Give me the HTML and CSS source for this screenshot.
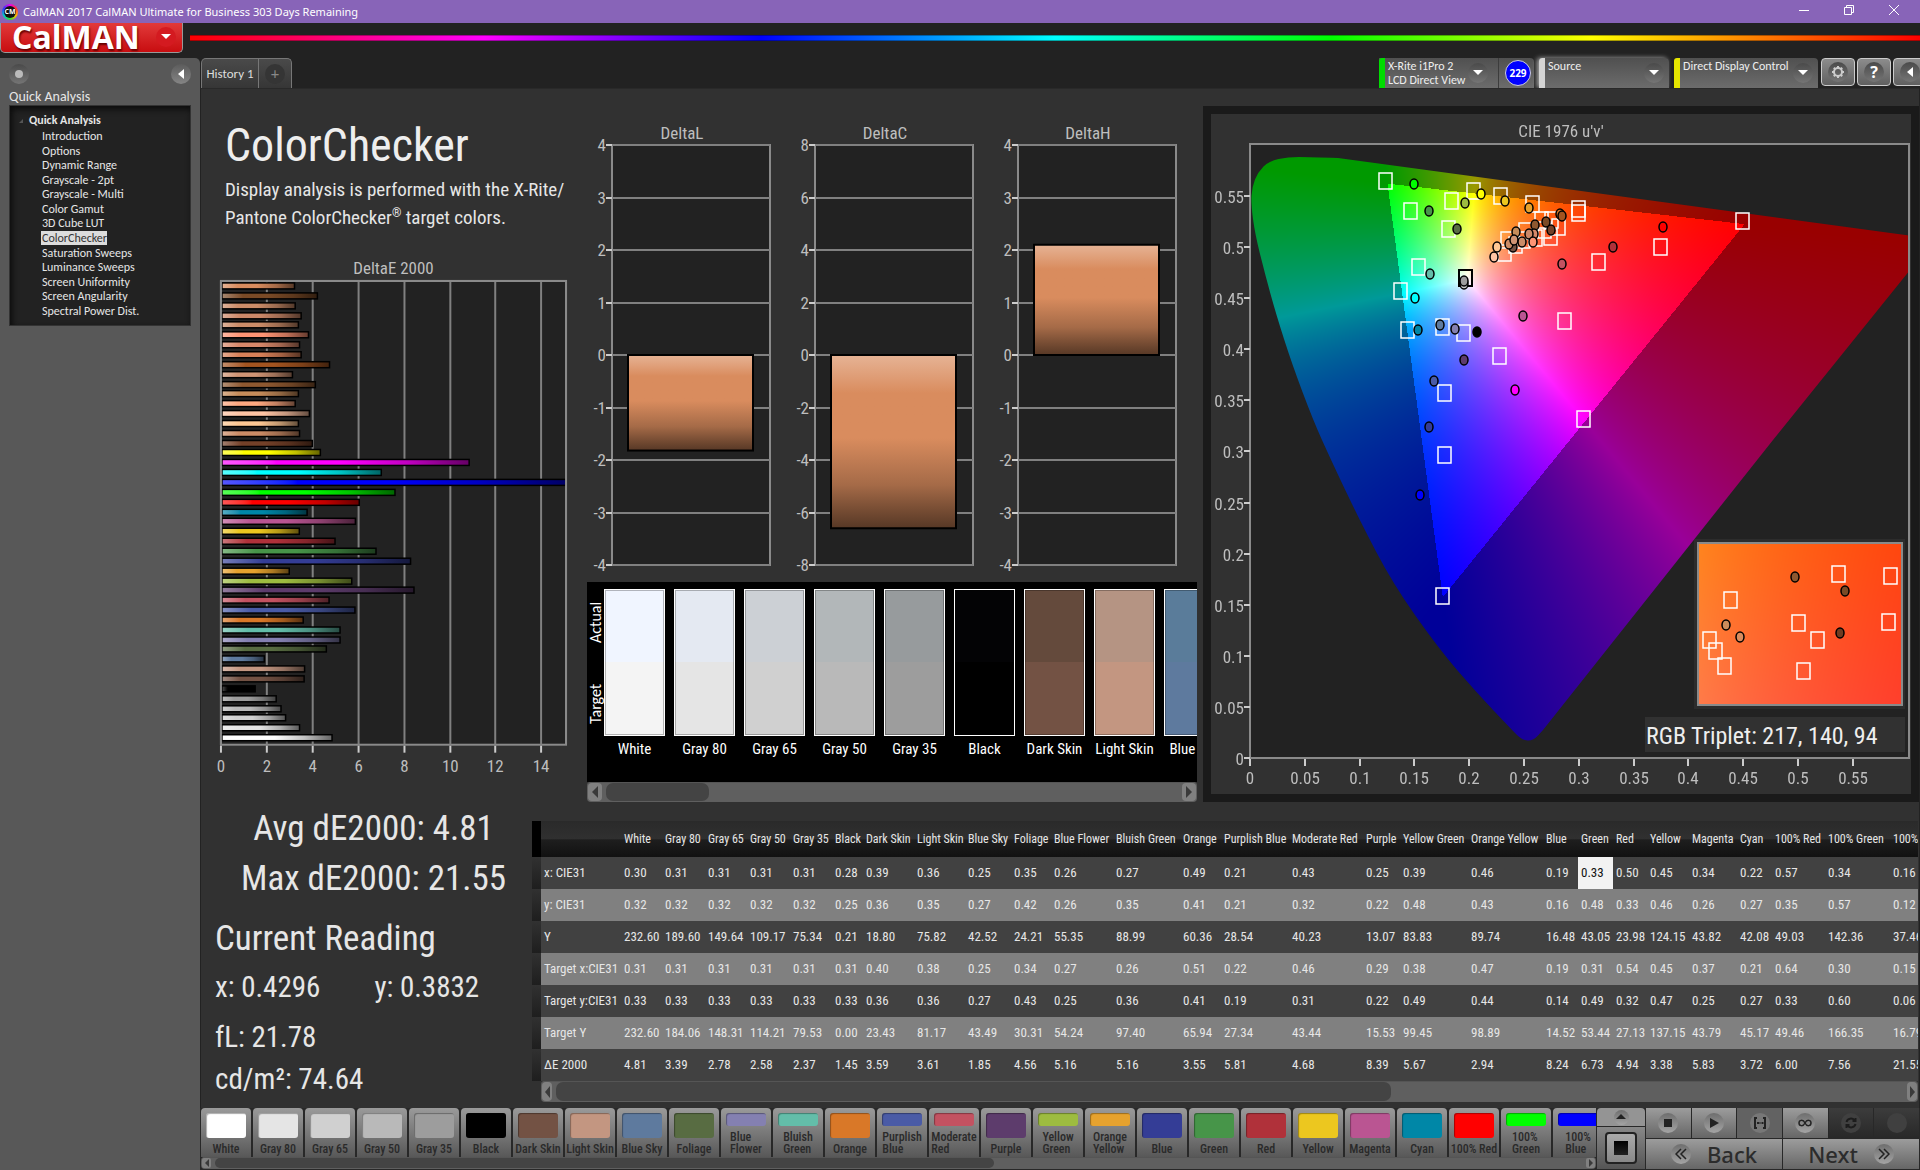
FILE: index.html
```html
<!DOCTYPE html>
<html lang="en">
<head>
<meta charset="utf-8">
<title>CalMAN 2017 CalMAN Ultimate for Business</title>
<link rel="stylesheet" href="styles.css">
</head>
<body>
<header class="titlebar">
  <span class="app-icon"><span>CM</span></span>
  <span class="app-title">CalMAN 2017 CalMAN Ultimate for Business 303 Days Remaining</span>
  <button class="win" aria-label="Minimize"><svg width="12" height="12"><path d="M1 6.500h10"/></svg></button>
  <button class="win" aria-label="Restore"><svg width="12" height="12"><path d="M1.500 3.500h7v7h-7zM3.500 3.500v-2h7v7h-2"/></svg></button>
  <button class="win" aria-label="Close"><svg width="12" height="12"><path d="M1 1l10 10M11 1L1 11"/></svg></button>
</header>
<div class="brandbar">
  <button class="logo"><span>CalMAN</span><span class="round red"><svg width="10" height="6"><path d="M0 0h10L5 5z"/></svg></span></button>
  <div class="rainbow"></div>
</div>
<div class="shell">
  <aside class="sidebar">
    <div class="side-tools">
      <button class="round" aria-label="Pin"><svg width="10" height="10"><circle cx="5" cy="5" r="4" class="knob"/></svg></button>
      <button class="round lite" aria-label="Collapse"><svg width="6" height="10"><path d="M6 0v10L0 5z"/></svg></button>
    </div>
    <h2>Quick Analysis</h2>
    <nav class="tree">
      <strong>Quick Analysis</strong>
      <ul>
        <li><a href="#">Introduction</a></li>
        <li><a href="#">Options</a></li>
        <li><a href="#">Dynamic Range</a></li>
        <li><a href="#">Grayscale - 2pt</a></li>
        <li><a href="#">Grayscale - Multi</a></li>
        <li><a href="#">Color Gamut</a></li>
        <li><a href="#">3D Cube LUT</a></li>
        <li><a href="#" class="current">ColorChecker</a></li>
        <li><a href="#">Saturation Sweeps</a></li>
        <li><a href="#">Luminance Sweeps</a></li>
        <li><a href="#">Screen Uniformity</a></li>
        <li><a href="#">Screen Angularity</a></li>
        <li><a href="#">Spectral Power Dist.</a></li>
      </ul>
    </nav>
  </aside>
  <div class="main">
    <div class="toolbar">
      <div class="tabs">
        <button class="tab">History 1</button>
        <button class="tab add" aria-label="Add history"><span class="round">+</span></button>
      </div>
      <div class="devices">
        <div class="meter">
          <button class="device green"><span>X-Rite i1Pro 2<br>LCD Direct View</span><span class="round"><svg width="10" height="6"><path d="M0 0h10L5 5z"/></svg></span></button>
          <span class="count">229</span>
        </div>
        <button class="device white"><span>Source</span><span class="round"><svg width="10" height="6"><path d="M0 0h10L5 5z"/></svg></span></button>
        <button class="device yellow"><span>Direct Display Control</span><span class="round"><svg width="10" height="6"><path d="M0 0h10L5 5z"/></svg></span></button>
        <div class="tools">
          <button class="tool" aria-label="Settings"><span class="round"><svg width="14" height="14" viewBox="0 0 14 14" class="line"><circle cx="7" cy="7" r="4"/><path d="M7 1v2M7 11v2M1 7h2M11 7h2M2.800 2.800l1.400 1.400M9.800 9.800l1.400 1.400M11.200 2.800L9.800 4.200M4.200 9.800l-1.400 1.400"/></svg></span></button>
          <button class="tool" aria-label="Help"><span class="round help">?</span></button>
          <button class="tool" aria-label="Collapse toolbar"><span class="round"><svg width="6" height="10"><path d="M6 0v10L0 5z"/></svg></span></button>
        </div>
      </div>
    </div>
    <main class="workspace">
      <div class="upper">
        <section class="intro">
          <h1>ColorChecker</h1>
          <p>Display analysis is performed with the X-Rite/<br>Pantone ColorChecker<sup>®</sup> target colors.</p>
          <svg class="chart" id="delta-e" viewBox="0 0 380 530"></svg>
        </section>
        <section class="middle">
          <div class="deltas">
            <svg class="chart delta" viewBox="0 0 203 450" data-title="DeltaL" data-max="4" data-value="-1.82"></svg>
            <svg class="chart delta" viewBox="0 0 203 450" data-title="DeltaC" data-max="8" data-value="-6.6"></svg>
            <svg class="chart delta" viewBox="0 0 203 450" data-title="DeltaH" data-max="4" data-value="2.1"></svg>
          </div>
          <div class="compare">
            <div class="axis"><span>Actual</span><span>Target</span></div>
            <div class="pairs" id="pairs"></div>
          </div>
          <div class="scroll tall">
            <button aria-label="Scroll left"><svg width="6" height="12"><path d="M6 0v12L0 6z"/></svg></button>
            <div class="track"><div class="thumb short"></div></div>
            <button aria-label="Scroll right"><svg width="6" height="12"><path d="M0 0v12l6-6z"/></svg></button>
          </div>
        </section>
        <section class="cie">
          <svg class="chart" id="cie" viewBox="0 0 700 680">
            <rect x="39" y="30" width="659" height="614" class="plot"/>
            <foreignObject x="39" y="30" width="659" height="614"><canvas id="gamut" width="659" height="614"></canvas></foreignObject>
          </svg>
        </section>
      </div>
      <div class="lower">
        <section class="readings">
          <div class="stat">Avg dE2000: 4.81</div>
          <div class="stat">Max dE2000: 21.55</div>
          <h3>Current Reading</h3>
          <div class="pair"><span>x: 0.4296</span><span>y: 0.3832</span></div>
          <div class="lum"><div>fL: 21.78</div><div>cd/m²: 74.64</div></div>
        </section>
        <section class="results">
          <div class="clip"><table id="results"></table></div>
          <div class="scroll tall">
            <button aria-label="Scroll left"><svg width="5" height="12"><path d="M5 0v12L0 6z"/></svg></button>
            <div class="track"><div class="thumb long"></div></div>
            <button aria-label="Scroll right"><svg width="5" height="12"><path d="M0 0v12l5-6z"/></svg></button>
          </div>
        </section>
      </div>
    </main>
    <footer class="dock">
      <div class="patches">
        <div class="strip" id="patches"></div>
        <div class="scroll thin">
          <button aria-label="Scroll left"><svg width="4" height="8"><path d="M4 0v8L0 4z"/></svg></button>
          <div class="track"><div class="thumb half"></div></div>
          <button aria-label="Scroll right"><svg width="4" height="8"><path d="M0 0v8l4-4z"/></svg></button>
        </div>
      </div>
      <div class="pattern">
        <button class="up" aria-label="Expand"><span class="round"><svg width="10" height="6"><path d="M5 0l5 5H0z"/></svg></span></button>
        <button class="window" aria-label="Pattern window"><span></span></button>
      </div>
      <div class="controls">
        <div class="transport">
          <button aria-label="Stop"><span class="round"><svg width="8" height="8"><path d="M0 0h8v8H0z"/></svg></span></button>
          <button aria-label="Read"><span class="round"><svg width="10" height="10"><path d="M1 0l9 5-9 5z"/></svg></span></button>
          <button class="mid" aria-label="Read series"><span class="round"><svg width="14" height="12" class="line"><path d="M4 1H2v10h2M10 1h2v10h-2M4 6h2M6.500 6h1M8.500 6h2"/></svg></span></button>
          <button aria-label="Read continuous"><span class="round"><svg width="14" height="8" class="line thin-line"><path d="M7 4C5 0 1 1 1 4s4 4 6 0 6-3 6 0-4 4-6 0z"/></svg></span></button>
          <button class="off" aria-label="Auto advance"><span class="round"><svg width="12" height="12" class="line"><path d="M1.500 5a4.500 4.500 0 0 1 8-1.500M10.500 7a4.500 4.500 0 0 1-8 1.500M10.500 1v3h-3M1.500 11V8h3"/></svg></span></button>
          <button class="off" aria-label="Record"><span class="round"></span></button>
        </div>
        <div class="pager">
          <button><span class="round"><svg width="12" height="12" class="line thin-line"><path d="M6 1L1 6l5 5M11 1L6 6l5 5"/></svg></span>Back</button>
          <button>Next<span class="round"><svg width="12" height="12" class="line thin-line"><path d="M1 1l5 5-5 5M6 1l5 5-5 5"/></svg></span></button>
        </div>
      </div>
    </footer>
  </div>
</div>
<script src="script.js"></script>
</body>
</html>
```

FILE: styles.css
```css
:root {
  --ui: Carlito, Lato, "Noto Sans", sans-serif;
  --narrow: "Roboto Condensed", Carlito, Roboto, sans-serif;
}
* { box-sizing: border-box; }
body {
  margin: 0;
  min-height: 100vh;
  display: flex;
  flex-direction: column;
  background: #222;
  color: #e6e6e6;
  font: 12px/14px var(--ui);
}
button { font: inherit; color: inherit; border: 0; padding: 0; margin: 0; background: none; }
svg { display: block; }
svg path { fill: currentColor; }
svg.line path, svg.line circle { fill: none; stroke: currentColor; stroke-width: 2; }
svg.thin-line path { stroke-width: 1.5; }

/* window title */
.titlebar { display: flex; align-items: center; height: 23px; padding: 0 4px 0 2px; background: #8864b8; color: #fff; }
.app-icon {
  width: 16px; height: 16px; padding: 2px; margin-right: 5px; border-radius: 50%;
  background: conic-gradient(#e0e, #f33, #fb0, #3d3, #0cc, #33f, #e0e);
}
.app-icon span { display: block; border-radius: 50%; background: #111; font: bold 7px/12px "Open Sans", sans-serif; text-align: center; }
.app-title { flex: 1; font: 11px/16px "Noto Sans", sans-serif; }
.win { width: 45px; height: 23px; display: grid; place-items: center; padding-bottom: 3px; }
.win path { fill: none; stroke: #fff; }

/* brand row */
.brandbar { display: flex; align-items: flex-start; height: 35px; gap: 7px; }
.logo {
  width: 183px; height: 30px; padding: 0 6px 2px 11px; display: flex; align-items: center; justify-content: space-between;
  background: linear-gradient(#e23a3a, #c80d10); border: 1px solid #999; border-top: 0; border-radius: 0 0 5px 5px;
  color: #fff; font: 700 32px/26px "Open Sans", sans-serif; text-shadow: 1px 2px 2px #600;
}
.rainbow {
  flex: 1; height: 6px; margin-top: 12px; border: solid #0005; border-width: 1px 0;
  background: linear-gradient(90deg, #f00, #f0f 17%, #00f 33%, #0ff 50%, #0f0 66%, #ff0 81%, #f00);
}
.round {
  width: 20px; height: 20px; border-radius: 50%; display: grid; place-items: center; flex: none;
  background: linear-gradient(#4a4a4a, #757575); color: #fff;
}
.round.red { background: #d41a20; }
.round.lite { background: linear-gradient(#5c5c5c, #858585); }
.knob { fill: #bbb; }

.shell { flex: 1; display: flex; }

/* workflow tree */
.sidebar { width: 200px; padding: 2px 9px; background: #585858; border-radius: 0 5px 0 0; }
.side-tools { display: flex; justify-content: space-between; height: 27px; align-items: center; }
.sidebar h2 { margin: 2px 0 0; font: 14px/16px var(--ui); }
.tree {
  height: 221px; padding: 7px 0; background: #222; border: 1px solid #333;
  box-shadow: inset 2px 3px 6px #0a0a0a; display: flex; flex-direction: column;
}
.tree strong { position: relative; padding-left: 19px; line-height: 15px; }
.tree strong::before { content: ""; position: absolute; left: 9px; top: 2px; border: solid transparent; border-width: 4px 0 0 4px; border-right: 0; border-bottom: 4px solid #555; }
.tree ul { list-style: none; margin: 0; padding: 1px 0 0 32px; flex: 1; display: flex; flex-direction: column; }
.tree li { flex: 1; display: flex; align-items: center; }
.tree a { color: #e6e6e6; text-decoration: none; line-height: 14px; }
.tree a.current { background: #dcdcdc; color: #333; margin-left: -1px; padding-left: 1px; }

.main { flex: 1; min-width: 0; display: flex; flex-direction: column; }

/* tabs and devices */
.toolbar { display: flex; justify-content: space-between; height: 30px; }
.tabs { display: flex; margin-left: 1px; border: 1px solid #777; border-bottom: 0; border-radius: 5px 5px 0 0; background: linear-gradient(#4a4a4a, #363636); }
.tab { width: 56px; font-size: 13px; color: #ddd; }
.tab.add { width: 33px; border-left: 1px solid #777; display: grid; place-items: center; }
.tab.add .round { background: #353535; color: #888; font-size: 16px; }
.devices { display: flex; gap: 5px; }
.meter { display: flex; width: 155px; background: linear-gradient(#505050, #6c6c6c); border-radius: 0 4px 0 0; }
.device {
  display: flex; align-items: center; justify-content: space-between; text-align: left;
  padding: 0 5px 0 3px; border-left: 6px solid; border-radius: 3px 4px 0 0; color: #eee;
  background: linear-gradient(#505050, #6c6c6c);
}
.device > span:first-child { align-self: flex-start; padding-top: 1px; white-space: nowrap; }
.device.green { width: 119px; padding-right: 10px; border-color: #0d0; border-radius: 3px 0 0 0; box-shadow: 1px 0 #3c3c3c; }
.device.white { width: 130px; border-color: #d4d4d4; box-shadow: -2px 0 5px #aaa; }
.device.yellow { width: 144px; border-color: #e6e600; }
.count {
  width: 26px; height: 26px; margin: 2px 0 0 7px; border-radius: 50%; background: #00f; border: 1px solid #ccd;
  font: bold 10px/24px "Open Sans", sans-serif; text-align: center; color: #fff;
}
.tools { display: flex; gap: 2px; margin-left: -2px; width: 99px; overflow: hidden; }
.tool { flex: none; width: 34px; height: 28px; display: grid; place-items: center; border: 1px solid #ccc; border-radius: 4px; background: linear-gradient(#8c8c8c, #606060); }
.tool .line { color: #ccc; }
.help { font: bold 16px/20px "Open Sans", sans-serif; }

/* report page */
.workspace { flex: 1; background: #313131; border-left: 1px solid #222; border-top: 1px solid #292929; margin-right: 1px; }
.upper { display: grid; grid-template-columns: minmax(0, 379fr) minmax(0, 621fr) minmax(0, 718fr); }
.intro h1 { margin: 30px 0 0 24px; font: 46px/52px var(--narrow); color: #eee; }
.intro p { margin: 5px 0 0 24px; height: 80px; font: 19px/28px var(--narrow); white-space: nowrap; }
.intro sup { font-size: 12px; line-height: 12px; }
.chart { width: 100%; height: auto; }
.chart text { font: 17px var(--narrow); fill: #bebebe; }
.plot { fill: #222; stroke: #8a8a8a; stroke-width: 2; }
.frame { fill: none; stroke: #8a8a8a; stroke-width: 2; }
.grid { stroke: #808080; stroke-width: 2; }
.tick { stroke: #ccc; stroke-width: 2; }
.end { text-anchor: end; }
.chart .center { text-anchor: middle; }
.deltas { display: grid; grid-template-columns: 1fr 1fr 1fr; padding-right: 12px; }
.middle { padding-top: 35px; }
.compare { display: flex; height: 200px; margin: 8px 4px 0 7px; background: #000; overflow: hidden; }
.axis { width: 17px; flex: none; display: flex; flex-direction: column; padding-top: 17px; gap: 36px; }
.axis span { writing-mode: vertical-rl; transform: rotate(180deg); font-size: 16px; line-height: 17px; height: 46px; text-align: center; color: #fff; }
.pairs { display: flex; gap: 9px; padding-top: 7px; }
.patch-pair { flex: none; width: 61px; text-align: center; font: 15px/26px var(--narrow); white-space: nowrap; color: #fff; }
.patch-pair div { height: 147px; border: 1px solid #fff; outline: 1px solid #0004; outline-offset: -2px; }
.scroll { display: flex; background: #5f5f5f; border-radius: 4px; padding: 1px; box-shadow: inset 0 1px #555; }
.scroll button { flex: none; display: grid; place-items: center; width: 14px; background: #808080; border-radius: 4px; color: #3a3a3a; }
.track { flex: 1; margin: 0 4px; display: flex; }
.thumb { background: #444; border-radius: 7px; }
.tall { height: 20px; }
.middle .scroll { margin: 0 4px 0 7px; }
.short { width: 18%; }
.long { width: 62%; }
.half { width: 57%; }
.cie { margin: 17px 0 0 2px; border: 8px solid #1a1a1a; align-self: start; }
#cie .triplet { font-size: 24px; fill: #eee; }
#gamut { display: block; }
.target { fill: none; stroke: #fff; stroke-width: 1.5; }
.target.ref { stroke: #000; stroke-width: 2; }
.dot { stroke: #000; stroke-width: 1.5; }

/* readings and results */
.lower { display: grid; grid-template-columns: 331px minmax(0, 1fr); padding-top: 2px; }
.readings { padding-left: 14px; font: 29px/46px var(--narrow); }
.stat { text-align: center; font-size: 35px; line-height: 50px; }
.readings h3 { margin: 10px 0 0; font: 35px/50px var(--narrow); }
.pair { display: flex; gap: 54px; }
.lum { margin-top: 6px; line-height: 42px; }
.results { padding: 17px 1px 0 0; }
.results .scroll { margin-left: 9px; height: 21px; }
.results .scroll button { width: 10px; }
.clip { overflow: hidden; }
table { table-layout: fixed; width: 1422px; border-collapse: collapse; font: 13px/32px var(--narrow); color: #e6e6e6; }
th, td { padding: 0 0 0 3px; height: 32px; text-align: left; font-weight: 400; white-space: nowrap; }
thead th { height: 36px; font-size: 12px; background: linear-gradient(#2a2a2a 0%, #303030 50%, #1e1e1e 52%, #111 100%); }
thead th:first-child { background: #000; }
tbody tr { background: #414141; }
tbody tr:nth-child(even) { background: #808080; }
tbody td:first-child { background: linear-gradient(#313131, #1e1e1e); }
td.selected { background: #f2f2f2; color: #111; }

/* dock */
.dock { display: flex; height: 62px; background: #282828; color: #2c2c2c; padding: 0 1px 1px; }
.patches { flex: 1; min-width: 0; display: flex; flex-direction: column; }
.strip { display: flex; gap: 2px; height: 49px; overflow: hidden; }
.patch {
  flex: none; width: 50px; padding: 5px 0 2px; display: flex; flex-direction: column; align-items: center;
  background: linear-gradient(#9a9a9a, #585858); border-radius: 4px 4px 0 0; font: 500 12px/12px var(--narrow); color: #2a2a2a;
}
.patch i { width: 40px; flex: 1; border-radius: 3px; box-shadow: inset 1px 1px 1px #0005; }
.patch span { text-align: left; padding-top: 5px; white-space: nowrap; }
.thin { height: 12px; }
.thin button { width: 9px; border-radius: 2px; }
.pattern { width: 48px; margin-left: 1px; display: flex; flex-direction: column; gap: 1px; }
.pattern button { display: grid; place-items: center; }
.dock .round { background: linear-gradient(#6e6e6e, #a4a4a4); color: #222; }
.up { height: 18px; background: #949494; border-radius: 4px 4px 0 0; }
.up .round { width: 15px; height: 15px; }
.window { flex: 1; background: linear-gradient(#888, #555); }
.window span { width: 32px; height: 32px; border: 2px solid #222; border-radius: 4px; background: linear-gradient(#000, #222) center/14px 14px no-repeat, linear-gradient(#aaa, #888); }
.controls { width: 273px; margin-left: 1px; display: flex; flex-direction: column; gap: 1px; }
.transport { display: grid; grid-template-columns: repeat(6, 1fr); gap: 1px; height: 30px; }
.controls button { display: flex; align-items: center; justify-content: center; background: linear-gradient(#9c9c9c, #666); }
.controls .transport .mid { background: #626262; }
.transport .mid .round { background: #777; }
.controls .transport .off { background: linear-gradient(#3c3c3c, #282828); }
.transport .off .round { background: #404040; color: #1c1c1c; }
.pager { flex: 1; display: grid; grid-template-columns: 1fr 1fr; gap: 1px; }
.pager button { gap: 16px; font: 500 22px/28px "Noto Sans", sans-serif; }
```

FILE: script.js
```js
const NS = "http://www.w3.org/2000/svg";

function draw(parent, tag, attrs, text) {
  const el = document.createElementNS(NS, tag);
  for (const key in attrs) el.setAttribute(key, attrs[key]);
  if (text !== undefined) el.textContent = text;
  parent.append(el);
  return el;
}

// name | column width | target colour | x | y | Y | target x | target y | target Y | dE2000
const patches = `White|41|#f4f4f4|0.30|0.32|232.60|0.31|0.33|232.60|4.81
Gray 80|43|#e5e5e5|0.31|0.32|189.60|0.31|0.33|184.06|3.39
Gray 65|42|#d0d0d0|0.31|0.32|149.64|0.31|0.33|148.31|2.78
Gray 50|43|#b9b9b9|0.31|0.32|109.17|0.31|0.33|114.21|2.58
Gray 35|42|#9d9d9d|0.31|0.32|75.34|0.31|0.33|79.53|2.37
Black|31|#000000|0.28|0.25|0.21|0.31|0.33|0.00|1.45
Dark Skin|51|#735244|0.39|0.36|18.80|0.40|0.36|23.43|3.59
Light Skin|51|#c39681|0.36|0.35|75.82|0.38|0.36|81.17|3.61
Blue Sky|46|#5e7a9e|0.25|0.27|42.52|0.25|0.27|43.49|1.85
Foliage|40|#586c42|0.35|0.42|24.21|0.34|0.43|30.31|4.56
Blue Flower|62|#8480b1|0.26|0.26|55.35|0.27|0.25|54.24|5.16
Bluish Green|67|#63bda9|0.27|0.35|88.99|0.26|0.36|97.40|5.16
Orange|41|#d97828|0.49|0.41|60.36|0.51|0.41|65.94|3.55
Purplish Blue|68|#4a5ba6|0.21|0.21|28.54|0.22|0.19|27.34|5.81
Moderate Red|74|#c35261|0.43|0.32|40.23|0.46|0.31|43.44|4.68
Purple|37|#5d3c6c|0.25|0.22|13.07|0.29|0.22|15.53|8.39
Yellow Green|68|#9dbc40|0.39|0.48|83.83|0.38|0.49|99.45|5.67
Orange Yellow|75|#e6a22e|0.46|0.43|89.74|0.47|0.44|98.89|2.94
Blue|35|#343d96|0.19|0.16|16.48|0.19|0.14|14.52|8.24
Green|35|#479549|0.33|0.48|43.05|0.31|0.49|53.44|6.73
Red|34|#b0313a|0.50|0.33|23.98|0.54|0.32|27.13|4.94
Yellow|42|#ecc71f|0.45|0.46|124.15|0.45|0.47|137.15|3.38
Magenta|48|#ba5592|0.34|0.26|43.82|0.37|0.25|43.79|5.83
Cyan|35|#0087a7|0.22|0.27|42.08|0.21|0.27|45.17|3.72
100% Red|53|#ff0000|0.57|0.35|49.03|0.64|0.33|49.46|6.00
100% Green|65|#00ff00|0.34|0.57|142.36|0.30|0.60|166.35|7.56
100% Blue|64|#0000ff|0.16|0.12|37.46|0.15|0.06|16.79|21.55`
  .split("\n").map(line => {
    const [name, width, color, ...values] = line.split("|");
    return { name, width, color, values };
  });

// Measured colours of the patches in the comparison strip
const measured = ["#f0f5ff", "#e4e9f2", "#ccd0d5", "#b2b7b9", "#979b9d", "#030305", "#644a3c", "#b59483", "#5a7c9a"];

// Remaining dE2000 bars: cyan, magenta, yellow and the skin tones
const extraBars = [
  ["#00ffff", 6.96], ["#ff00ff", 10.8], ["#ffff00", 4.3], ["#734028", 3.95], ["#cc8c66", 3.39], ["#ffc894", 3.34],
  ["#ffc4a4", 3.82], ["#ffa880", 3.2], ["#c68c5a", 3.34], ["#8e5830", 4.08], ["#d09474", 3.08], ["#a45420", 4.7],
  ["#d88058", 3.46], ["#d8886a", 3.39], ["#ff9474", 3.78], ["#cc8c68", 3.34], ["#cc8868", 3.46], ["#cc8c68", 3.2],
  ["#7a4a26", 4.17], ["#d98c5e", 3.17]
];

function gradient(svg, id, color, vertical) {
  const g = draw(svg, "linearGradient", vertical ? { id, x2: 0, y2: 1 } : { id });
  const mix = (offset, style) => draw(g, "stop", { offset, style: "stop-color:" + style });
  mix(0, `color-mix(in srgb, ${color} 66%, #fff)`);
  mix(0.22, color);
  mix(0.48, color);
  mix(0.75, `color-mix(in srgb, ${color} 76%, #000)`);
  mix(1, `color-mix(in srgb, ${color} 40%, #000)`);
}

function drawDeltaE(svg) {
  const left = 20, right = 366, top = 25, bottom = 490, unit = 22.95;
  draw(svg, "text", { x: 193, y: 18, class: "center" }, "DeltaE 2000");
  draw(svg, "rect", { x: left, y: top, width: right - left, height: bottom - top, class: "plot" });
  for (let v = 0; v < 15; v += 2) {
    const x = Math.round(left + v * unit);
    draw(svg, "line", { x1: x, x2: x, y1: top, y2: bottom, class: "grid" });
    draw(svg, "line", { x1: x, x2: x, y1: bottom + 1, y2: bottom + 8, class: "tick" });
    draw(svg, "text", { x, y: 517, class: "center" }, v);
  }
  const bars = patches.map(p => [p.color === "#f4f4f4" ? "#ffffff" : p.color, +p.values[6]]).concat(extraBars).reverse();
  bars.forEach(([color, value], i) => {
    gradient(svg, "bar" + i, color);
    // The axis ends at 15; a longer bar is cut there
    const width = Math.min(value * unit, right - left - 1);
    draw(svg, "rect", { x: left + 1, y: Math.round(27 + i * 9.85), width, height: 6, fill: `url(#bar${i})`, stroke: "#000", "stroke-width": 1.5 });
  });
  draw(svg, "path", { d: `M${left} ${bottom}V${top}H${right}V${bottom}`, class: "frame" });
}

function drawDelta(svg, index) {
  const { title, max, value } = svg.dataset;
  const left = 32, right = 190, top = 21, bottom = 441, zero = 231;
  draw(svg, "text", { x: 102, y: 15, class: "center" }, title);
  draw(svg, "rect", { x: left, y: top, width: right - left, height: bottom - top, class: "plot" });
  for (let i = 0; i <= 8; i++) {
    const y = Math.round(top + i * 52.5);
    draw(svg, "line", { x1: left, x2: right, y1: y, y2: y, class: "grid" });
    draw(svg, "line", { x1: left - 6, x2: left, y1: y, y2: y, class: "tick" });
    draw(svg, "text", { x: left - 6, y: y + 6, class: "end" }, max - i * max / 4);
  }
  gradient(svg, "delta" + index, "#d98c5e", true);
  const height = Math.abs(value) / max * 210;
  draw(svg, "rect", { x: 48, y: value > 0 ? zero - height : zero, width: 125, height, fill: `url(#delta${index})`, stroke: "#000", "stroke-width": 2 });
}

// Linear RGB of a u'v' chromaticity, scaled so that the largest channel is 1
function rgb(u, v) {
  const X = 9 * u, Y = 4 * v, Z = 12 - 3 * u - 20 * v;
  const c = [3.2406 * X - 1.5372 * Y - 0.4986 * Z, -0.9689 * X + 1.8758 * Y + 0.0415 * Z, 0.0557 * X - 0.204 * Y + 1.057 * Z];
  const inside = Math.min(...c) >= 0;
  const peak = Math.max(...c);
  return c.map(n => Math.max(0, n) / peak * (inside ? 255 : 153));
}

function paint(canvas, u0, u1, v0, v1) {
  const { width, height } = canvas;
  const ctx = canvas.getContext("2d");
  const image = ctx.createImageData(width, height);
  for (let y = 0; y < height; y++) {
    for (let x = 0; x < width; x++) {
      const color = rgb(u0 + (u1 - u0) * x / width, v1 + (v0 - v1) * y / height);
      image.data.set([...color, 255], (y * width + x) * 4);
    }
  }
  ctx.putImageData(image, 0, 0);
  return ctx;
}

const locus = [[60, 13], [38, 13], [19, 17], [8, 28], [2, 43], [1, 60], [5, 90], [15, 130], [26, 170], [42, 220], [63, 276],
  [81, 316], [109, 375], [143, 440], [189, 505], [226, 548], [262, 586], [272, 596], [283, 597], [293, 586]];

const targets = [[.124, .565], [.204, .555], [.184, .545], [.147, .535], [.182, .518], [.229, .55], [.258, .542], [.3, .537],
  [.3, .533], [.45, .525], [.375, .5], [.318, .485], [.154, .48], [.138, .457], [.144, .419], [.176, .422], [.195, .416],
  [.228, .393], [.287, .428], [.178, .357], [.305, .332], [.178, .296], [.176, .159], [.266, .526], [.276, .526],
  [.282, .52], [.252, .516], [.235, .507], [.261, .509], [.275, .51], [.243, .502], [.233, .494], [.25, .507], [.269, .517]];

const dots = [[.15, .562, "#0f0"], [.196, .543, "#9dbc40"], [.211, .552, "#ff0"], [.233, .545, "#ecc71f"], [.255, .538, "#e6a22e"],
  [.163, .535, "#479549"], [.189, .518, "#586c42"], [.377, .52, "#f00"], [.331, .5, "#b0313a"], [.285, .483, "#c35261"],
  [.164, .474, "#63bda9"], [.151, .45, "#0ff"], [.153, .419, "#0087a7"], [.173, .424, "#5e7a9e"], [.187, .42, "#8480b1"],
  [.207, .417, "#000"], [.195, .389, "#5d3c6c"], [.168, .369, "#4a5ba6"], [.163, .324, "#343d96"], [.242, .36, "#f0f"],
  [.249, .432, "#ba5592"], [.155, .257, "#00f"], [.195, .464, "#ccc"], [.195, .467, "#9d9d9d"], [.283, .532, "#d97828"],
  [.285, .53, "#a45420"], [.26, .522, "#8e5830"], [.27, .524, "#7a4a26"], [.275, .517, "#734028"], [.243, .515, "#c68c5a"],
  [.225, .5, "#ffc894"], [.223, .49, "#ffc4a4"], [.24, .5, "#735244"], [.236, .503, "#cc8c66"], [.241, .507, "#d09474"],
  [.259, .513, "#d8886a"], [.255, .513, "#cc8868"], [.248, .505, "#cc8c68"], [.258, .505, "#ff9474"]];

const insetTargets = [[141, 31], [193, 33], [33, 57], [101, 80], [191, 79], [120, 97], [12, 97], [18, 108], [27, 123], [106, 128]];
const insetDots = [[97, 34, "#8e5830"], [147, 48, "#7a4a26"], [28, 82, "#cc8c5c"], [42, 94, "#d98c5e"], [142, 90, "#703c22"]];

function drawCie(svg) {
  const x0 = 39, y0 = 644, su = 1096, sv = 1022;
  const canvas = document.getElementById("gamut");
  const ctx = paint(canvas, 0, 659 / su, 0, 614 / sv);
  ctx.globalCompositeOperation = "destination-in";
  ctx.beginPath();
  ctx.moveTo(88, 14);
  locus.forEach(([x, y], i) => {
    const [nx, ny] = locus[i + 1] || [523, 296];
    if (i === locus.length - 1) ctx.lineTo(x, y);
    else ctx.quadraticCurveTo(x, y, (x + nx) / 2, (y + ny) / 2);
  });
  ctx.lineTo(523, 296);
  ctx.lineTo(685, 95);
  ctx.closePath();
  ctx.fill();

  draw(svg, "text", { x: 350, y: 23, class: "center" }, "CIE 1976 u'v'");
  draw(svg, "rect", { x: 39, y: 30, width: 659, height: 614, class: "frame" });
  for (let i = 0; i < 12; i++) {
    const label = +(i * 0.05).toFixed(2);
    const x = Math.round(x0 + label * su), y = Math.round(y0 - label * sv);
    draw(svg, "line", { x1: x, x2: x, y1: y0 + 1, y2: y0 + 8, class: "tick" });
    draw(svg, "text", { x, y: 670, class: "center" }, label);
    draw(svg, "line", { x1: x0 - 6, x2: x0, y1: y, y2: y, class: "tick" });
    draw(svg, "text", { x: x0 - 6, y: y + 7, class: "end" }, label);
  }
  const square = (x, y, cls = "target") => draw(svg, "rect", { x: x - 7, y: y - 8, width: 13, height: 16, class: cls });
  const dot = (x, y, fill) => draw(svg, "ellipse", { cx: x, cy: y, rx: 4, ry: 5, fill, class: "dot" });
  const px = u => Math.round(x0 + u * su), py = v => Math.round(y0 - v * sv);
  targets.forEach(([u, v]) => square(px(u), py(v)));
  square(px(.197), py(.47), "target ref");
  dots.forEach(([u, v, fill]) => dot(px(u), py(v), fill));

  draw(svg, "rect", { x: 483, y: 425, width: 211, height: 170, fill: "#2c2c2c" });
  const holder = draw(svg, "foreignObject", { x: 487, y: 429, width: 204, height: 162 });
  const inset = document.createElement("canvas");
  inset.width = 204;
  inset.height = 162;
  holder.append(inset);
  paint(inset, .246, .296, .502, .529);
  insetTargets.forEach(([x, y]) => square(487 + x, 429 + y));
  insetDots.forEach(([x, y, fill]) => dot(487 + x, 429 + y, fill));
  draw(svg, "rect", { x: 487, y: 429, width: 204, height: 162, class: "frame" });
  draw(svg, "rect", { x: 434, y: 603, width: 260, height: 35, fill: "#313131" });
  draw(svg, "text", { x: 435, y: 630, class: "triplet" }, "RGB Triplet: 217, 140, 94");
}

function fillPairs(box) {
  measured.forEach((actual, i) => {
    const { name, color } = patches[i];
    box.insertAdjacentHTML("beforeend",
      `<div class="patch-pair"><div style="background:linear-gradient(${actual} 50%, ${color} 50%)"></div>${name}</div>`);
  });
}

function fillTable(table) {
  const rows = ["x: CIE31", "y: CIE31", "Y", "Target x:CIE31", "Target y:CIE31", "Target Y", "ΔE 2000"];
  const cols = [9, 80, ...patches.map(p => p.width)].map(w => `<col style="width:${w}px">`).join("");
  const head = patches.map(p => `<th scope="col">${p.name}</th>`).join("");
  const body = rows.map((label, r) => `<tr><td></td><th scope="row">${label}</th>` +
    patches.map(p => `<td${r === 0 && p.name === "Green" ? ' class="selected"' : ""}>${p.values[r]}</td>`).join("") + "</tr>").join("");
  table.innerHTML = `<colgroup>${cols}</colgroup><thead><tr><th></th><th></th>${head}</tr></thead><tbody>${body}</tbody>`;
}

function fillPatches(box) {
  const twoLines = ["Blue Flower", "Bluish Green", "Purplish Blue", "Moderate Red", "Yellow Green", "Orange Yellow", "100% Green", "100% Blue"];
  patches.forEach(({ name, color }) => {
    const label = twoLines.includes(name) ? name.replace(" ", "<br>") : name;
    const fill = name === "White" ? "#fff" : color;
    box.insertAdjacentHTML("beforeend", `<button class="patch"><i style="background:${fill}"></i><span>${label}</span></button>`);
  });
}

drawDeltaE(document.getElementById("delta-e"));
document.querySelectorAll(".delta").forEach(drawDelta);
drawCie(document.getElementById("cie"));
fillPairs(document.getElementById("pairs"));
fillTable(document.getElementById("results"));
fillPatches(document.getElementById("patches"));
```
